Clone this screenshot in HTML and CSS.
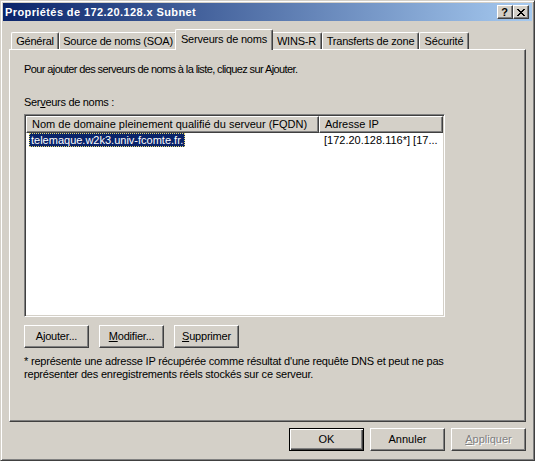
FILE: index.html
```html
<!DOCTYPE html>
<html lang="fr">
<head>
<meta charset="utf-8">
<title>Propriétés de 172.20.128.x Subnet</title>
<link rel="stylesheet" href="styles.css">
</head>
<body>
<div class="window">
  <div class="titlebar">
    <span class="title">Propriétés de 172.20.128.x Subnet</span>
    <div class="tbtns">
      <span class="tbtn help">?</span>
      <span class="tbtn close"><svg width="8" height="7" viewBox="0 0 8 7"><path d="M0 0h2v1h-2zM6 0h2v1h-2zM1 1h2v1h-2zM5 1h2v1h-2zM2 2h4v1h-4zM3 3h2v1h-2zM2 4h4v1h-4zM1 5h2v1h-2zM5 5h2v1h-2zM0 6h2v1h-2zM6 6h2v1h-2z" fill="#000"/></svg></span>
    </div>
  </div>
  <div class="body">
    <div class="tabs">
      <div class="tab t1">Général</div>
      <div class="tab t2">Source de noms (SOA)</div>
      <div class="tab t3 active">Serveurs de noms</div>
      <div class="tab t4">WINS-R</div>
      <div class="tab t5">Transferts de zone</div>
      <div class="tab t6">Sécurité</div>
    </div>
    <div class="panel">
      <p class="intro">Pour ajouter des serveurs de noms à la liste, cliquez sur Ajouter.</p>
      <p class="label">Ser<u>v</u>eurs de noms :</p>
      <div class="list">
        <div class="lhead">
          <div class="hcell c1">Nom de domaine pleinement qualifié du serveur (FQDN)</div>
          <div class="hcell c2">Adresse IP</div>
        </div>
        <div class="lrow">
          <div class="cell c1"><span class="sel">telemaque.w2k3.univ-fcomte.fr.</span></div>
          <div class="cell c2">[172.20.128.116*] [17...</div>
        </div>
      </div>
      <div class="btnrow">
        <span class="btn small">A<u>j</u>outer...</span>
        <span class="btn small"><u>M</u>odifier...</span>
        <span class="btn small"><u>S</u>upprimer</span>
      </div>
      <p class="note">* représente une adresse IP récupérée comme résultat d'une requête DNS et peut ne pas<br>représenter des enregistrements réels stockés sur ce serveur.</p>
    </div>
    <div class="footer">
      <span class="btn big default">OK</span>
      <span class="btn big">Annuler</span>
      <span class="btn big disabled"><u>A</u>ppliquer</span>
    </div>
  </div>
</div>
</body>
</html>
```

FILE: styles.css
```css
* { box-sizing: border-box; }
html, body { margin: 0; padding: 0; background: #d4d0c8; }
body {
  font-family: "Liberation Sans", Arial, sans-serif;
  font-size: 11px;
  line-height: 13px;
  color: #000;
}
p { margin: 0; }
u { text-decoration: underline; text-underline-offset: 1px; }

.window {
  width: 535px;
  height: 461px;
  background: #d4d0c8;
  border: 1px solid;
  border-color: #d4d0c8 #404040 #404040 #d4d0c8;
  box-shadow: inset 1px 1px #fff, inset -1px -1px #808080;
  padding: 2px;
  display: flex;
  flex-direction: column;
}

.titlebar {
  height: 18px;
  background: linear-gradient(to right, #0a246a, #a6caf0);
  display: flex;
  align-items: center;
  justify-content: space-between;
  padding: 0 3px 0 2px;
}
.title {
  color: #fff;
  font-weight: bold;
  font-size: 11px;
  letter-spacing: 0.4px;
  padding-top: 1px;
  white-space: nowrap;
}
.tbtns { display: flex; }
.tbtn {
  width: 16px;
  height: 14px;
  background: #d4d0c8;
  border: 1px solid;
  border-color: #fff #404040 #404040 #fff;
  box-shadow: inset -1px -1px #808080;
  display: flex;
  align-items: center;
  justify-content: center;
}
.help {
  font-weight: bold;
  font-size: 11px;
  line-height: 12px;
  padding-right: 1px;
}
.close svg { display: block; margin-right: 1px; }

.body {
  display: flex;
  flex-direction: column;
  padding: 0 6px;
}

.tabs {
  display: flex;
  align-items: flex-end;
  margin-top: 8px;
  padding-left: 2px;
}
.tab {
  height: 17px;
  padding-top: 2px;
  text-align: center;
  white-space: nowrap;
  letter-spacing: -0.2px;
  border-top: 1px solid #fff;
  border-left: 1px solid #fff;
  border-right: 1px solid #404040;
  border-radius: 2px 2px 0 0;
  box-shadow: inset -1px 0 #808080;
  background: #d4d0c8;
}
.t1 { width: 48px; }
.t2 { width: 118px; }
.t3 { width: 94px; }
.t4 { width: 51px; }
.t5 { width: 97px; }
.t6 { width: 50px; }
.tab.active {
  position: relative;
  z-index: 1;
  height: 21px;
  width: 98px;
  margin: 0 -2px -1px -2px;
  padding-top: 3px;
}

.panel {
  height: 373px;
  border: 1px solid;
  border-color: #fff #404040 #404040 #fff;
  box-shadow: inset -1px -1px #808080;
  padding: 13px 0 0 14px;
}
.intro { white-space: nowrap; letter-spacing: -0.6px; }
.label { margin-top: 20px; letter-spacing: -0.3px; }

.list {
  margin-top: 5px;
  width: 421px;
  height: 203px;
  background: #fff;
  border: 1px solid;
  border-color: #808080 #fff #fff #808080;
  box-shadow: inset 1px 1px #404040, inset -1px -1px #d4d0c8;
  padding: 1px;
}
.lhead { display: flex; height: 17px; }
.hcell {
  background: #d4d0c8;
  border: 1px solid;
  border-color: #fff #404040 #404040 #fff;
  box-shadow: inset -1px -1px #808080;
  padding: 1px 0 0 5px;
  white-space: nowrap;
  overflow: hidden;
}
.lhead .c1 { width: 293px; }
.lhead .c2 { flex: 1; }
.lrow { display: flex; height: 14px; }
.cell { white-space: nowrap; line-height: 14px; }
.lrow .c1 { width: 293px; padding-left: 3px; }
.lrow .c2 { flex: 1; padding-left: 5px; }
.sel {
  display: inline-block;
  height: 14px;
  background: #0a246a;
  color: #fff;
  padding: 0 2px;
  outline: 1px dotted #e8d870;
  outline-offset: -1px;
}

.btnrow {
  display: flex;
  gap: 10px;
  margin-top: 8px;
}
.btn {
  height: 23px;
  background: #d4d0c8;
  border: 1px solid;
  border-color: #fff #404040 #404040 #fff;
  box-shadow: inset -1px -1px #808080;
  display: flex;
  align-items: center;
  justify-content: center;
  white-space: nowrap;
}
.btn.small { width: 65px; letter-spacing: -0.2px; }
.btn.big { width: 75px; }
.btn.default {
  border: 1px solid #000;
  box-shadow: inset 1px 1px #fff, inset -1px -1px #404040, inset -2px -2px #808080;
}
.btn.disabled {
  color: #808080;
  text-shadow: 1px 1px #fff;
}

.note {
  margin-top: 7px;
  white-space: nowrap;
  letter-spacing: -0.2px;
}

.footer {
  display: flex;
  justify-content: flex-end;
  gap: 6px;
  margin-top: 6px;
}
```
